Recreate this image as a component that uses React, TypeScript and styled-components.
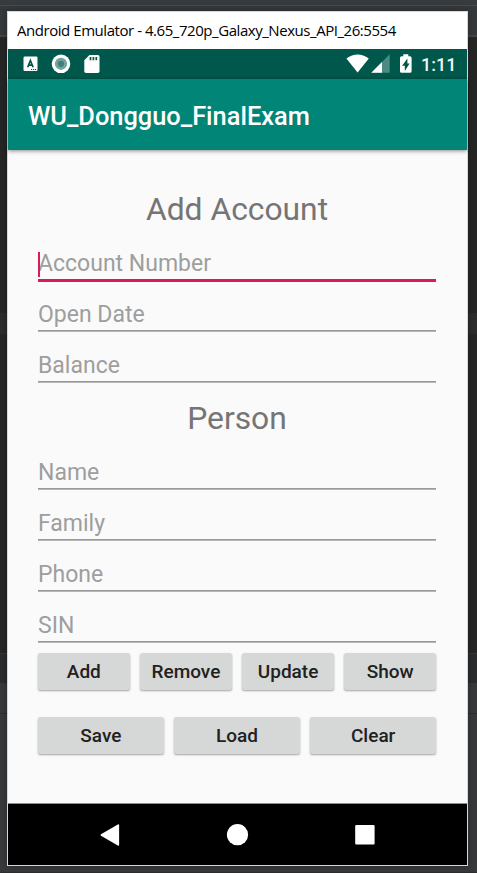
import React from "react";
import styled, { createGlobalStyle } from "styled-components";

const GlobalStyle = createGlobalStyle`
  * { box-sizing: border-box; }
  html, body { margin: 0; padding: 0; }
  body { overflow: hidden; background: #262626; }
`;

const Desktop = styled.div`
  width: 477px;
  height: 873px;
  padding: 11px 9px 7px 7px;
  background: linear-gradient(
    #383b3d 0 5px, #484a4c 5px 6px, #36393b 6px 35px, #434546 35px 37px,
    #262626 37px 313px, #2d2d2d 313px 334px, #262626 334px 653px,
    #343637 653px 654px, #2a2c2e 654px 683px, #37393b 683px 713px,
    #2b2d2e 713px 714px, #37393b 714px 872px, #2b2d2e 872px
  );
`;

const EmulatorWindow = styled.main`
  width: 461px;
  height: 855px;
  border: 1px solid #d5d8d8;
  background: #fafafa;
  display: flex;
  flex-direction: column;
  font-family: Roboto, sans-serif;
  box-shadow: 0 0 7px rgba(0, 0, 0, 0.3);
`;

const WindowTitle = styled.div`
  height: 37px;
  flex: none;
  padding-left: 9px;
  background: #fff;
  color: #000;
  font: 15px/37px "Open Sans", sans-serif;
  letter-spacing: -0.45px;
  white-space: nowrap;
`;

const StatusBar = styled.div`
  height: 30px;
  flex: none;
  background: #00574b;
  display: flex;
  justify-content: space-between;
  color: #fff;
`;

const StatusIcons = styled.svg`
  display: block;
  height: 30px;
`;

const StatusRight = styled.div`
  display: flex;
`;

const Clock = styled.span`
  width: 46px;
  font-size: 18px;
  font-weight: 500;
  line-height: 31px;
  color: #f0f5f4;
`;

const AppBar = styled.header`
  height: 71px;
  flex: none;
  padding-left: 20px;
  background: #008577;
  color: #fff;
  font-size: 25.4px;
  font-weight: 500;
  line-height: 75px;
  box-shadow: 0 1px 4px rgba(0, 0, 0, 0.45);
`;

const Form = styled.section`
  flex: 1;
  padding: 35px 31px 0 30px;
`;

const Heading = styled.h1`
  height: 56px;
  margin: 0;
  text-align: center;
  color: #757575;
  font-size: 31.8px;
  font-weight: 400;
  line-height: 48px;
`;

const Field = styled.div<{ $focused?: boolean }>`
  height: 51px;
  display: flex;
  flex-direction: column;
  color: #9e9e9e;
  font-size: 23px;
  line-height: 45px;

  &::after {
    content: "";
    flex: none;
    height: ${(p) => (p.$focused ? 3 : 2)}px;
    background: ${(p) => (p.$focused ? "#d81b60" : "linear-gradient(#999 50%, #b5b5b5 50%)")};
  }
`;

const Hint = styled.span`
  height: 38px;
  flex: none;
  position: relative;
`;

const Caret = styled.i`
  position: absolute;
  left: 0;
  top: 11px;
  width: 2px;
  height: 25px;
  background: #d81b60;
`;

const ButtonRow = styled.div<{ $columns: number }>`
  display: grid;
  grid-template-columns: repeat(${(p) => p.$columns}, 1fr);
  column-gap: 10.5px;
  margin: -1px 0 28px;
`;

const ActionButton = styled.button`
  height: 37px;
  padding: 1px 0 0;
  border: 0;
  border-radius: 2.5px;
  background: #d6d7d7;
  color: #212121;
  font: 500 19px/36px Roboto, sans-serif;
  box-shadow: 0 1px 2px rgba(0, 0, 0, 0.35);
`;

const NavBar = styled.nav`
  height: 62px;
  flex: none;
  border-top: 1px solid #8c8c8c;
  background: #000;
  display: flex;
  justify-content: center;
  align-items: center;
  gap: 99px;
`;

const NavIcon = styled.svg`
  width: 28px;
  height: 28px;
  display: block;
  fill: #fff;
`;

const accountFields = ["Account Number", "Open Date", "Balance"];
const personFields = ["Name", "Family", "Phone", "SIN"];

export default function App() {
  return (
    <>
      <GlobalStyle />
      <Desktop>
        <EmulatorWindow>
          <WindowTitle>Android Emulator - 4.65_720p_Galaxy_Nexus_API_26:5554</WindowTitle>
          <StatusBar>
            <StatusIcons width="100" viewBox="0 0 100 30">
              <rect x="15.5" y="7.5" width="14" height="14.5" rx="1.2" fill="#fff" />
              <path d="M19.7 18.3 22.4 11.5 25.1 18.3M20.7 16.2h3.4" fill="none" stroke="#00574b" strokeWidth="1.7" />
              <path d="M23 20.5h1.2M25 20.5h1.2M27 20.5h1.2" stroke="#00574b" strokeWidth="1" />
              <circle cx="53" cy="14.8" r="9.3" fill="#fff" />
              <circle cx="53" cy="14.8" r="6.1" fill="#72a39c" />
              <circle cx="53" cy="14.8" r="3.1" fill="#3f8175" />
              <path d="M81.5 6h8.3q1.7 0 1.7 1.7v14.6q0 1.7-1.7 1.7H78q-1.7 0-1.7-1.7V11.2z" fill="#fff" />
              <path d="M82.5 8v3.3M85.4 8v3.3M88.3 8v3.3" stroke="#00574b" strokeWidth="1.7" />
            </StatusIcons>
            <StatusRight>
              <StatusIcons width="78" viewBox="335 0 78 30">
                <path d="M338.4 9.4Q349.5 1.8 360.8 9.4L349.6 23.4z" fill="#fff" />
                <path d="M381.7 5.3V23.7H363.3z" fill="#4c8b81" />
                <path d="M374 13v10.7h-10.7z" fill="#fff" />
                <path d="M395.3 5.3h5v2h1.7q1.6 0 1.6 1.6v13.4q0 1.5-1.6 1.5h-8.4q-1.6 0-1.6-1.5V8.9q0-1.6 1.6-1.6h1.7z" fill="#fff" />
                <path d="M399.4 9.5v5h2.2l-4.8 7.5v-5.2h-2.7z" fill="#00574b" />
              </StatusIcons>
              <Clock>1:11</Clock>
            </StatusRight>
          </StatusBar>
          <AppBar>WU_Dongguo_FinalExam</AppBar>
          <Form>
            <Heading>Add Account</Heading>
            {accountFields.map((label, i) => (
              <Field key={label} $focused={i === 0}>
                <Hint>
                  {label}
                  {i === 0 && <Caret />}
                </Hint>
              </Field>
            ))}
            <Heading>Person</Heading>
            {personFields.map((label) => (
              <Field key={label}>
                <Hint>{label}</Hint>
              </Field>
            ))}
            <ButtonRow $columns={4}>
              {["Add", "Remove", "Update", "Show"].map((t) => (
                <ActionButton key={t}>{t}</ActionButton>
              ))}
            </ButtonRow>
            <ButtonRow $columns={3}>
              {["Save", "Load", "Clear"].map((t) => (
                <ActionButton key={t}>{t}</ActionButton>
              ))}
            </ButtonRow>
          </Form>
          <NavBar>
            <NavIcon viewBox="0 0 28 28">
              <path d="M20.8 3.4q1.3-.7 1.3.8v19.6q0 1.4-1.3.8L4 14.8q-1.1-.8 0-1.6z" />
            </NavIcon>
            <NavIcon viewBox="0 0 28 28">
              <circle cx="13.5" cy="13.7" r="10.6" />
            </NavIcon>
            <NavIcon viewBox="0 0 28 28">
              <rect x="4.2" y="4.1" width="19.4" height="19.4" rx="1" />
            </NavIcon>
          </NavBar>
        </EmulatorWindow>
      </Desktop>
    </>
  );
}
